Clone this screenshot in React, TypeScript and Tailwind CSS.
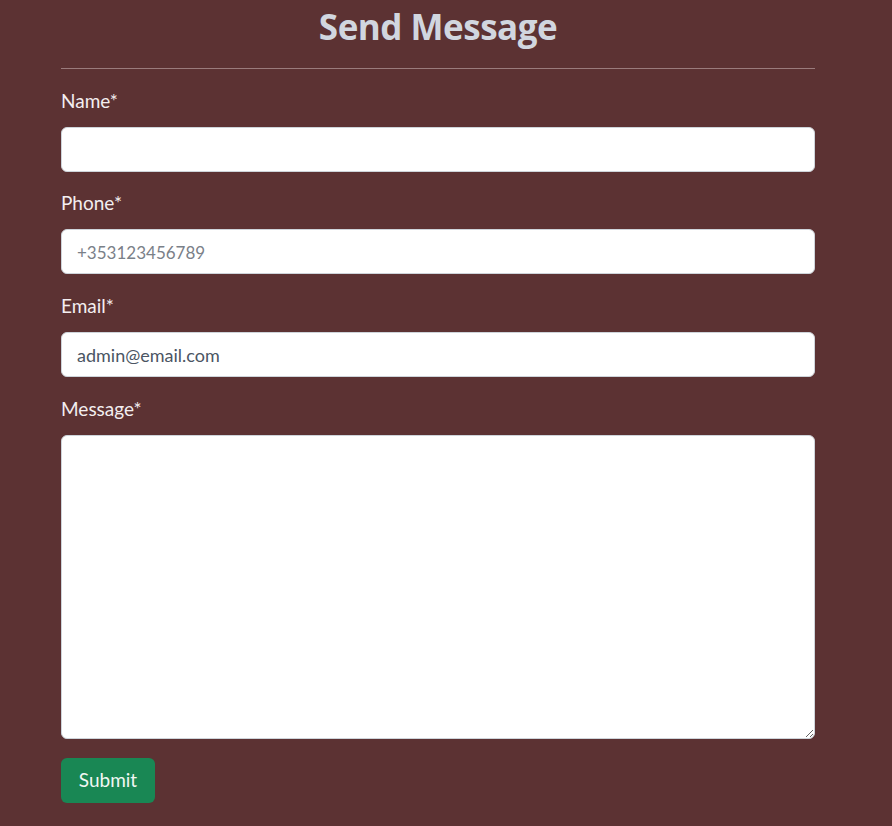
export default function App() {
  const label = "block text-[19px] leading-[27px] text-[#f3eef0] mb-3 -translate-y-px";
  const input =
    "block w-full h-[45px] rounded-[6px] border border-[#ced4da] bg-white px-[15px] text-[18px] text-[#4b5563] placeholder:text-[#7a8088] placeholder:text-[17px] outline-none";

  return (
    <div className="min-h-[826px] w-full bg-[#5c3233] font-['Lato',sans-serif]">
      <div className="ml-[61px] w-[754px] pt-[5px]">
        <h2 className="text-center font-['Open_Sans',sans-serif] text-[35px] font-bold leading-[43px] tracking-[-0.5px] text-[#d1d6df]">
          Send Message
        </h2>
        <hr className="mt-[20px] border-t border-[#9a7b7c]" />

        <form className="pt-[19px]" onSubmit={(e) => e.preventDefault()}>
          <div>
            <label className={label}>Name*</label>
            <input className={input} type="text" />
          </div>
          <div className="mt-[18px]">
            <label className={label}>Phone*</label>
            <input className={input} type="tel" placeholder="+353123456789" />
          </div>
          <div className="mt-[19px]">
            <label className={label}>Email*</label>
            <input className={input} type="email" defaultValue="admin@email.com" />
          </div>
          <div className="mt-[19px]">
            <label className={label}>Message*</label>
            <textarea className="block h-[304px] w-full rounded-[6px] border border-[#ced4da] bg-white px-[15px] py-2 text-[18px] text-[#4b5563] outline-none" />
          </div>
          <button
            type="submit"
            className="mt-[19px] h-[45px] w-[94px] rounded-[6px] bg-[#198754] text-[19px] text-[#f0f7f3]"
          >
            Submit
          </button>
        </form>
      </div>
    </div>
  );
}
